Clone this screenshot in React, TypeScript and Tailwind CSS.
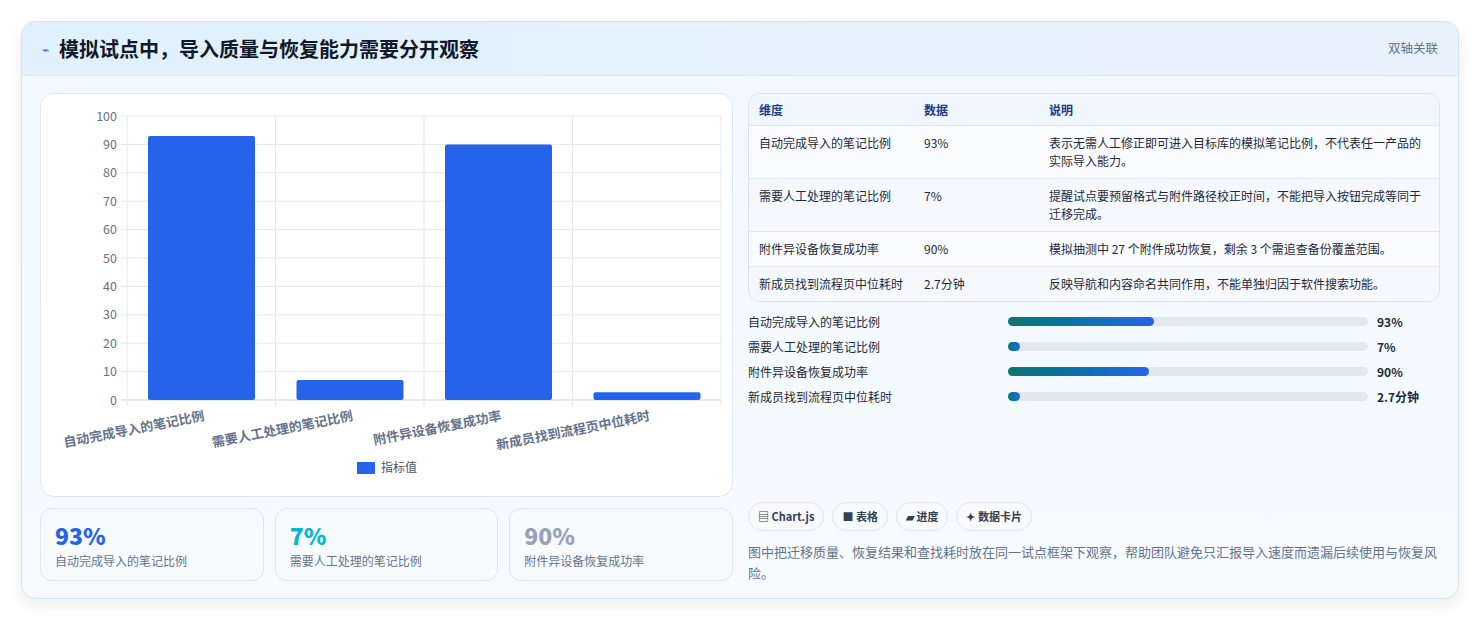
import React from "react";

const F = '"Noto Sans CJK SC", "Noto Sans", sans-serif';

function Chart() {
  const x0 = 86, x1 = 680, yTop = 22, yBot = 306;
  const cw = (x1 - x0) / 4;
  const vals = [93, 7, 90, 2.7];
  const labels = ["自动完成导入的笔记比例", "需要人工处理的笔记比例", "附件异设备恢复成功率", "新成员找到流程页中位耗时"];
  const y = (v: number) => yBot - (v / 100) * (yBot - yTop);
  return (
    <svg width="692" height="403" style={{ fontFamily: F }}>
      {Array.from({ length: 11 }).map((_, i) => {
        const v = i * 10;
        return (
          <g key={i}>
            <line x1={x0 - 6} x2={x1} y1={y(v)} y2={y(v)} stroke={i === 0 ? "#cbd5e1" : "#e5e7eb"} />
            <text x={x0 - 10} y={y(v) + 4.5} textAnchor="end" fontSize="12.5" fill="#6b7280">{v}</text>
          </g>
        );
      })}
      {[0, 1, 2, 3, 4].map((i) => (
        <line key={i} x1={x0 + i * cw} x2={x0 + i * cw} y1={yTop} y2={yBot + 6} stroke="#e5e7eb" />
      ))}
      {vals.map((v, i) => (
        <rect key={i} x={x0 + i * cw + 21} y={y(v)} width={107} height={yBot - y(v)} rx="2" fill="#2563eb" />
      ))}
      {labels.map((l, i) => {
        const ax = x0 + i * cw + 78, ay = yBot + 20;
        return (
          <text key={i} x={ax} y={ay} textAnchor="end" fontSize="13" fontWeight="600" fill="#64748b"
            transform={`rotate(-11 ${ax} ${ay})`}>{l}</text>
        );
      })}
      <rect x="316" y="368" width="18" height="12" fill="#2563eb" />
      <text x="340" y="378" fontSize="12" fill="#4b5563">指标值</text>
    </svg>
  );
}

const rows = [
  ["自动完成导入的笔记比例", "93%", "表示无需人工修正即可进入目标库的模拟笔记比例，不代表任一产品的实际导入能力。"],
  ["需要人工处理的笔记比例", "7%", "提醒试点要预留格式与附件路径校正时间，不能把导入按钮完成等同于迁移完成。"],
  ["附件异设备恢复成功率", "90%", "模拟抽测中 27 个附件成功恢复，剩余 3 个需追查备份覆盖范围。"],
  ["新成员找到流程页中位耗时", "2.7分钟", "反映导航和内容命名共同作用，不能单独归因于软件搜索功能。"],
];

const bars: [string, number, string][] = [
  ["自动完成导入的笔记比例", 146, "93%"],
  ["需要人工处理的笔记比例", 12, "7%"],
  ["附件异设备恢复成功率", 141, "90%"],
  ["新成员找到流程页中位耗时", 12, "2.7分钟"],
];

export default function App() {
  return (
    <div className="w-[1480px] h-[620px] bg-white pt-[21px] px-[21px]" style={{ fontFamily: F }}>
      <div className="h-[578px] rounded-[14px] border border-[#cfe3f3] bg-gradient-to-b from-[#f1f8fe] to-[#f7fbfe] shadow-[0_6px_18px_rgba(15,23,42,0.08)] overflow-hidden">
        <div className="h-[54px] flex items-center justify-between px-[20px] bg-gradient-to-r from-[#e0f0fd] to-[#e8f2fd] border-b border-[#d9e8f5]">
          <div className="flex items-center gap-[10px]">
            <span className="text-[#2563eb] text-[12px]">⌁</span>
            <span className="text-[20px] font-bold text-[#111827]">模拟试点中，导入质量与恢复能力需要分开观察</span>
          </div>
          <span className="text-[12.5px] text-[#64748b]">双轴关联</span>
        </div>
        <div className="flex gap-[15px] px-[18px] pt-[17px]">
          <div className="w-[693px] flex flex-col gap-[11px]">
            <div className="h-[404px] rounded-[14px] border border-[#e0e9f3] bg-white overflow-hidden">
              <Chart />
            </div>
            <div className="grid grid-cols-3 gap-[11px]">
              {[["93%", "text-[#2563eb]", "自动完成导入的笔记比例"], ["7%", "text-[#06b6d4]", "需要人工处理的笔记比例"], ["90%", "text-[#94a3b8]", "附件异设备恢复成功率"]].map(([v, c, l]) => (
                <div key={v} className="h-[73px] rounded-[12px] border border-[#dbe7f4] bg-[#f8fbfe] px-[14px] pt-[12px]">
                  <div className={`text-[23px] font-extrabold leading-[28px] ${c}`}>{v}</div>
                  <div className="text-[12px] text-[#64748b] mt-[3px]">{l}</div>
                </div>
              ))}
            </div>
          </div>
          <div className="w-[693px] flex flex-col">
            <div className="rounded-[12px] border border-[#d7e3ef] overflow-hidden bg-[#f8fbfe] text-[12px] text-[#1f2937]">
              <div className="flex h-[32px] items-center bg-[#eff6fe] text-[#1e3a8a] font-semibold border-b border-[#dbe5ef]">
                <div className="w-[175px] pl-[10px]">维度</div>
                <div className="w-[125px]">数据</div>
                <div>说明</div>
              </div>
              {rows.map((r, i) => (
                <div key={i} className={`flex py-[8px] ${i < 3 ? "border-b border-[#e2e8f0]" : ""} ${i % 2 ? "bg-[#f5f9fd]" : "bg-[#f9fbfe]"}`}>
                  <div className="w-[175px] pl-[10px] leading-[18px]">{r[0]}</div>
                  <div className="w-[125px] leading-[18px]">{r[1]}</div>
                  <div className="w-[378px] leading-[18px]">{r[2]}</div>
                </div>
              ))}
            </div>
            <div className="flex flex-col gap-[6px] mt-[10px]">
              {bars.map(([l, w, v]) => (
                <div key={l} className="flex items-center h-[19px] text-[12px] text-[#1f2937]">
                  <div className="w-[260px]">{l}</div>
                  <div className="w-[360px] h-[9px] rounded-full bg-[#e2e8f0]">
                    <div className="h-full rounded-full bg-gradient-to-r from-[#0f766e] to-[#2563eb]" style={{ width: w }} />
                  </div>
                  <div className="ml-[9px] font-bold">{v}</div>
                </div>
              ))}
            </div>
            <div className="flex gap-[8px] mt-[96px]">
              {["▤ Chart.js", "■ 表格", "▰ 进度", "✦ 数据卡片"].map((c) => (
                <span key={c} className="h-[29px] px-[9px] flex items-center rounded-full border border-[#e2e8f0] bg-[#f8fafc] text-[11px] font-semibold text-[#334155]">{c}</span>
              ))}
            </div>
            <p className="mt-[10px] text-[13px] leading-[21px] text-[#64748b]">图中把迁移质量、恢复结果和查找耗时放在同一试点框架下观察，帮助团队避免只汇报导入速度而遗漏后续使用与恢复风险。</p>
          </div>
        </div>
      </div>
    </div>
  );
}
